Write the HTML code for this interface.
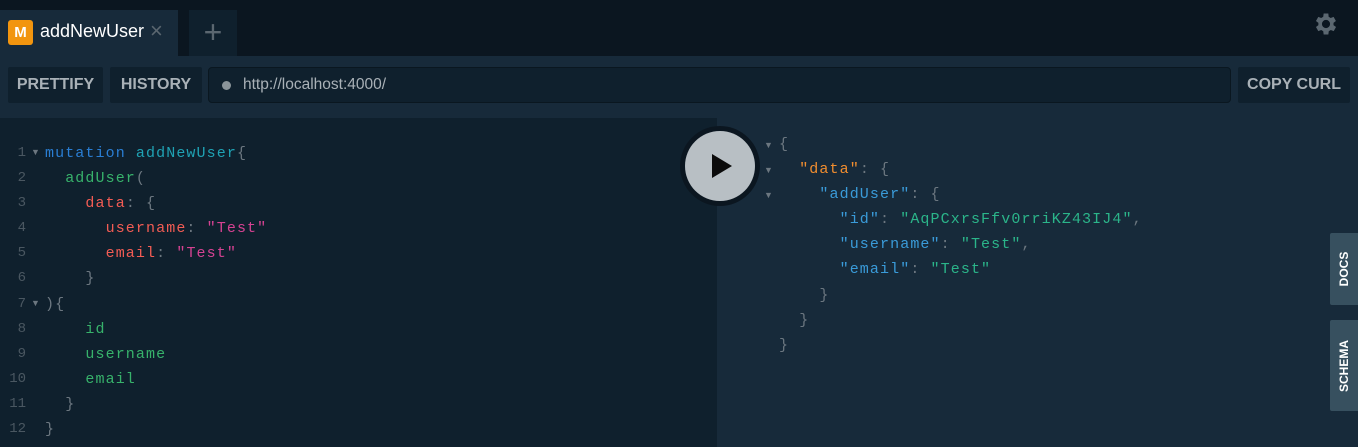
<!DOCTYPE html>
<html><head><style>
*{margin:0;padding:0;box-sizing:border-box}
body{width:1358px;height:447px;background:#0b1620;font-family:"Liberation Sans",sans-serif;position:relative;overflow:hidden}
.abs{position:absolute}
.tab{left:0;top:10px;width:178px;height:46px;background:#172a3a}
.m{left:8px;top:20px;width:25px;height:25px;background:#f2950f;border-radius:3px;color:#fff;font-weight:bold;font-size:15px;text-align:center;line-height:25px}
.tt{left:40px;top:21px;color:#fff;font-size:18px}
.x{left:150px;top:18px;color:#5b6770;font-size:22px}
.plus{left:189px;top:10px;width:48px;height:46px;background:#0f202d;color:#5b6770;font-size:32px;text-align:center;line-height:44px}
.bar{left:0;top:56px;width:1358px;height:62px;background:#172a3a}
.btn{top:67px;height:36px;background:#0f202d;color:#a9b1b7;font-weight:bold;font-size:16px;line-height:36px;text-align:center;border-radius:2px}
.url{left:208px;top:67px;width:1023px;height:36px;background:#0f202d;border:1px solid #0a1720;border-radius:4px;color:#a9b1b7;font-size:15.5px;line-height:34px;padding-left:34px}
.dot{left:222px;top:81px;width:9px;height:9px;border-radius:50%;background:#8a9499}
.left{left:0;top:118px;width:717px;height:329px;background:#0f202d}
.right{left:717px;top:118px;width:641px;height:329px;background:#172a3a}
.code{font-family:"Liberation Mono",monospace;font-size:15px;letter-spacing:1.1px;line-height:25.1px;white-space:pre}
.ln{color:#4a5761;font-size:14px;letter-spacing:0;text-align:right}
.k{color:#2a7ed3}.f{color:#1fa2b4}.g{color:#37b26b}.r{color:#f25c54}.s{color:#d64292}.p{color:#6c7780}.o{color:#f08d2f}.b{color:#3a9bd9}.gs{color:#2bb58a}
.play{left:680px;top:126px;width:80px;height:80px;border-radius:50%;background:#0b1620}
.play i{position:absolute;left:5px;top:5px;width:70px;height:70px;border-radius:50%;background:#b8bfc4}
.tri{color:#6c7780;font-size:9px}
.side{left:1330px;width:28px;background:#37505f;border-radius:2px 0 0 2px;color:#fff;font-weight:bold;font-size:12px}
.side span{position:absolute;left:50%;top:50%;transform:translate(-50%,-50%) rotate(-90deg);white-space:nowrap}
</style></head><body>
<div class="abs tab"></div>
<div class="abs m">M</div>
<div class="abs tt">addNewUser</div>
<div class="abs x">×</div>
<div class="abs plus">+</div>
<svg class="abs" style="left:1312px;top:10px" width="28" height="28" viewBox="0 0 24 24"><path fill="#5b6770" d="M19.4 13a7.5 7.5 0 000-2l2.1-1.6-2-3.5-2.5 1a7 7 0 00-1.7-1L15 3h-4l-.4 2.9a7 7 0 00-1.7 1l-2.5-1-2 3.5L6.5 11a7.5 7.5 0 000 2l-2.1 1.6 2 3.5 2.5-1a7 7 0 001.7 1L11 21h4l.4-2.9a7 7 0 001.7-1l2.5 1 2-3.5zM13 15.5a3.5 3.5 0 110-7 3.5 3.5 0 010 7z" transform="translate(-1 0)"/></svg>
<div class="abs bar"></div>
<div class="abs btn" style="left:8px;width:95px">PRETTIFY</div>
<div class="abs btn" style="left:110px;width:92px">HISTORY</div>
<div class="abs url">http://localhost:4000/</div>
<div class="abs dot"></div>
<div class="abs btn" style="left:1238px;width:112px">COPY CURL</div>
<div class="abs left"></div>
<div class="abs right"></div>
<div class="abs code ln" style="left:0;top:141px;width:26px">1
2
3
4
5
6
7
8
9
10
11
12</div>
<div class="abs tri" style="left:31px;top:147px">▼</div>
<div class="abs tri" style="left:31px;top:298px">▼</div>
<div class="abs code" style="left:45px;top:141px"><span class="k">mutation</span> <span class="f">addNewUser</span><span class="p">{</span>
  <span class="g">addUser</span><span class="p">(</span>
    <span class="r">data</span><span class="p">: {</span>
      <span class="r">username</span><span class="p">:</span> <span class="s">"Test"</span>
      <span class="r">email</span><span class="p">:</span> <span class="s">"Test"</span>
    <span class="p">}</span>
<span class="p">){</span>
    <span class="g">id</span>
    <span class="g">username</span>
    <span class="g">email</span>
  <span class="p">}</span>
<span class="p">}</span></div>
<div class="abs tri" style="left:764px;top:140px">▼</div>
<div class="abs tri" style="left:764px;top:165px">▼</div>
<div class="abs tri" style="left:764px;top:190px">▼</div>
<div class="abs code" style="left:779px;top:132px"><span class="p">{</span>
  <span class="o">"data"</span><span class="p">: {</span>
    <span class="b">"addUser"</span><span class="p">: {</span>
      <span class="b">"id"</span><span class="p">:</span> <span class="gs">"AqPCxrsFfv0rriKZ43IJ4"</span><span class="p">,</span>
      <span class="b">"username"</span><span class="p">:</span> <span class="gs">"Test"</span><span class="p">,</span>
      <span class="b">"email"</span><span class="p">:</span> <span class="gs">"Test"</span>
    <span class="p">}</span>
  <span class="p">}</span>
<span class="p">}</span></div>
<div class="abs play"><i></i><svg class="abs" style="left:30px;top:28px" width="24" height="24" viewBox="0 0 24 24"><path d="M2 0L22 12L2 24Z" fill="#0b0b0b"/></svg></div>
<div class="abs side" style="top:233px;height:72px"><span>DOCS</span></div>
<div class="abs side" style="top:320px;height:91px"><span>SCHEMA</span></div>
</body></html>
